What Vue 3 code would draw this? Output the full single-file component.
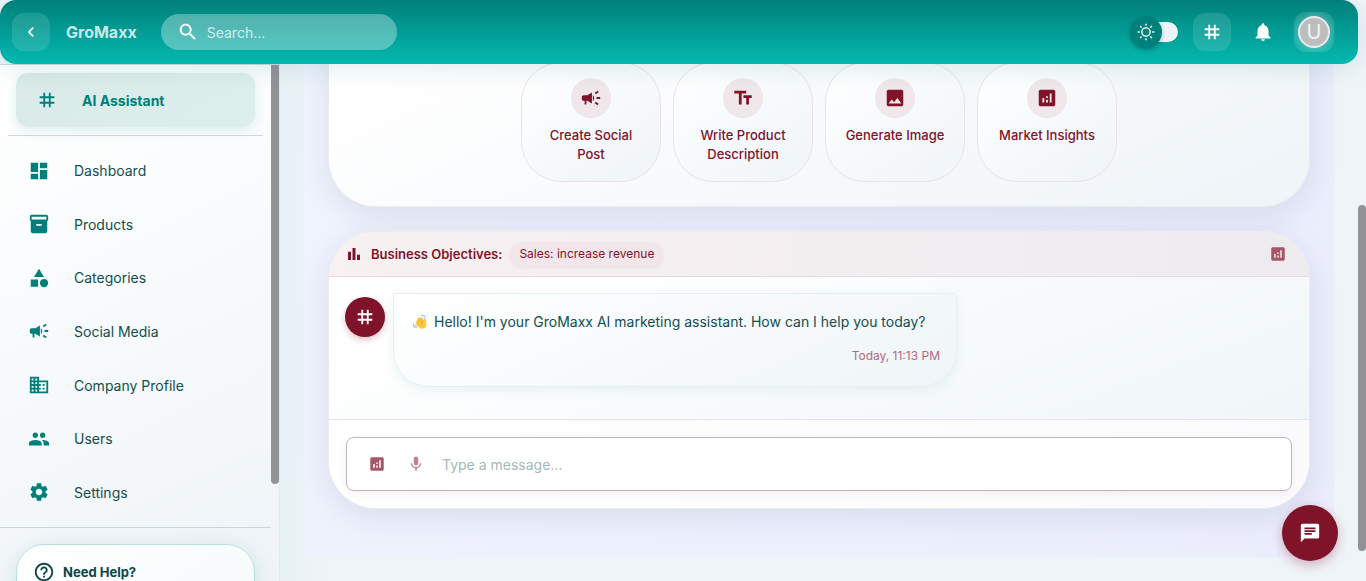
<script setup>
import { ref } from 'vue'

const icons = {
  dashboard: 'M3 13h8V3H3v10zm0 8h8v-6H3v6zm10 0h8V11h-8v10zm0-18v6h8V3h-8z',
  products: 'M20 2H4c-1 0-2 .9-2 2v3.01c0 .72.43 1.34 1 1.69V20c0 1.1 1.1 2 2 2h14c.9 0 2-.9 2-2V8.7c.57-.35 1-.97 1-1.69V4c0-1.1-1-2-2-2zm-5 12H9v-2h6v2zm5-7H4V4h16v3z',
  categories: 'M12 2l-5.5 9h11zM17.5 13a4.5 4.5 0 1 0 0 9 4.5 4.5 0 0 0 0-9zM3 13.5h8v8H3z',
  campaign: 'M18 11v2h4v-2h-4zm-2 6.61c.96.71 2.21 1.65 3.2 2.39.4-.53.8-1.07 1.2-1.6-.99-.74-2.24-1.68-3.2-2.4-.4.54-.8 1.08-1.2 1.61zM20.4 5.6c-.4-.53-.8-1.07-1.2-1.6-.99.74-2.24 1.68-3.2 2.4.4.53.8 1.07 1.2 1.6.96-.72 2.21-1.65 3.2-2.4zM4 9c-1.1 0-2 .9-2 2v2c0 1.1.9 2 2 2h1v4h2v-4h1l5 3V6L8 9H4zm11.5 3c0-1.33-.58-2.53-1.5-3.35v6.69c.92-.81 1.5-2.01 1.5-3.34z',
  business: 'M12 7V3H2v18h20V7H12zM6 19H4v-2h2v2zm0-4H4v-2h2v2zm0-4H4V9h2v2zm0-4H4V5h2v2zm4 12H8v-2h2v2zm0-4H8v-2h2v2zm0-4H8V9h2v2zm0-4H8V5h2v2zm10 12h-8v-2h2v-2h-2v-2h2v-2h-2V9h8v10zm-2-8h-2v2h2v-2zm0 4h-2v2h2v-2z',
  people: 'M16 11c1.66 0 2.99-1.34 2.99-3S17.66 5 16 5c-1.66 0-3 1.34-3 3s1.34 3 3 3zm-8 0c1.66 0 2.99-1.34 2.99-3S9.66 5 8 5C6.34 5 5 6.34 5 8s1.34 3 3 3zm0 2c-2.33 0-7 1.17-7 3.5V19h14v-2.5c0-2.33-4.67-3.5-7-3.5zm8 0c-.29 0-.62.02-.97.05 1.16.84 1.97 1.97 1.97 3.45V19h6v-2.5c0-2.33-4.67-3.5-7-3.5z',
  settings: 'M19.14 12.94c.04-.3.06-.61.06-.94 0-.32-.02-.64-.07-.94l2.03-1.58c.18-.14.23-.41.12-.61l-1.92-3.32c-.12-.22-.37-.29-.59-.22l-2.39.96c-.5-.38-1.03-.7-1.62-.94l-.36-2.54c-.04-.24-.24-.41-.48-.41h-3.84c-.24 0-.43.17-.47.41l-.36 2.54c-.59.24-1.13.57-1.62.94l-2.39-.96c-.22-.08-.47 0-.59.22L2.74 8.87c-.12.21-.08.47.12.61l2.03 1.58c-.05.3-.09.63-.09.94s.02.64.07.94l-2.03 1.58c-.18.14-.23.41-.12.61l1.92 3.32c.12.22.37.29.59.22l2.39-.96c.5.38 1.03.7 1.62.94l.36 2.54c.05.24.24.41.48.41h3.84c.24 0 .44-.17.47-.41l.36-2.54c.59-.24 1.13-.56 1.62-.94l2.39.96c.22.08.47 0 .59-.22l1.92-3.32c.12-.22.07-.47-.12-.61l-2.01-1.58zM12 15.6c-1.98 0-3.6-1.62-3.6-3.6s1.62-3.6 3.6-3.6 3.6 1.62 3.6 3.6-1.62 3.6-3.6 3.6z',
  tag: 'M20 10V8h-4V4h-2v4h-4V4H8v4H4v2h4v4H4v2h4v4h2v-4h4v4h2v-4h4v-2h-4v-4h4zm-6 4h-4v-4h4v4z',
  help: 'M11 18h2v-2h-2v2zm1-16C6.48 2 2 6.48 2 12s4.48 10 10 10 10-4.48 10-10S17.52 2 12 2zm0 18c-4.41 0-8-3.59-8-8s3.59-8 8-8 8 3.59 8 8-3.59 8-8 8zm0-14c-2.21 0-4 1.79-4 4h2c0-1.1.9-2 2-2s2 .9 2 2c0 2-3 1.75-3 5h2c0-2.25 3-2.5 3-5 0-2.21-1.79-4-4-4z',
  text: 'M2.5 4v3h5v12h3V7h5V4h-13zm19 5h-9v3h3v7h3v-7h3V9z',
  image: 'M21 19V5c0-1.1-.9-2-2-2H5c-1.1 0-2 .9-2 2v14c0 1.1.9 2 2 2h14c1.1 0 2-.9 2-2zM8.5 13.5l2.5 3.01L14.5 12l4.5 6H5l3.5-4.5z',
  analytics: 'M19 3H5c-1.1 0-2 .9-2 2v14c0 1.1.9 2 2 2h14c1.1 0 2-.9 2-2V5c0-1.1-.9-2-2-2zM9 17H7v-5h2v5zm4 0h-2v-3h2v3zm0-5h-2v-2h2v2zm4 5h-2V7h2v10z',
  bars: 'M4 9h4v11H4zm12 4h4v7h-4zm-6-9h4v16h-4z',
  search: 'M15.5 14h-.79l-.28-.27C15.41 12.59 16 11.11 16 9.5 16 5.91 13.09 3 9.5 3S3 5.91 3 9.5 5.91 16 9.5 16c1.61 0 3.09-.59 4.23-1.57l.27.28v.79l5 4.99L20.49 19l-4.99-5zm-6 0C7.01 14 5 11.99 5 9.5S7.01 5 9.5 5 14 7.01 14 9.5 11.99 14 9.5 14z',
  bell: 'M12 22c1.1 0 2-.9 2-2h-4c0 1.1.89 2 2 2zm6-6v-5c0-3.07-1.64-5.64-4.5-6.32V4c0-.83-.67-1.5-1.5-1.5s-1.5.67-1.5 1.5v.68C7.63 5.36 6 7.92 6 11v5l-2 2v1h16v-1l-2-2z',
  mic: 'M12 14c1.66 0 2.99-1.34 2.99-3L15 5c0-1.66-1.34-3-3-3S9 3.34 9 5v6c0 1.66 1.34 3 3 3zm5.3-3c0 3-2.54 5.1-5.3 5.1S6.7 14 6.7 11H5c0 3.41 2.72 6.23 6 6.72V21h2v-3.28c3.28-.48 6-3.3 6-6.72h-1.7z',
  chat: 'M20 2H4c-1.1 0-1.99.9-1.99 2L2 22l4-4h14c1.1 0 2-.9 2-2V4c0-1.1-.9-2-2-2zM6 9h12v2H6V9zm8 5H6v-2h8v2zm4-6H6V6h12v2z',
  back: 'M15.41 7.41 14 6l-6 6 6 6 1.41-1.41L10.83 12z',
}

const navItems = [
  { label: 'Dashboard', icon: icons.dashboard },
  { label: 'Products', icon: icons.products },
  { label: 'Categories', icon: icons.categories },
  { label: 'Social Media', icon: icons.campaign },
  { label: 'Company Profile', icon: icons.business },
  { label: 'Users', icon: icons.people },
  { label: 'Settings', icon: icons.settings },
]

const actions = [
  { label: 'Create Social Post', icon: icons.campaign },
  { label: 'Write Product Description', icon: icons.text },
  { label: 'Generate Image', icon: icons.image },
  { label: 'Market Insights', icon: icons.analytics },
]

const query = ref('')
const message = ref('')
const dark = ref(false)
</script>

<template>
  <div class="app">
    <header class="topbar">
      <button class="square" type="button" aria-label="Collapse menu">
        <svg class="i20" viewBox="0 0 24 24"><path :d="icons.back" /></svg>
      </button>
      <span class="brand">GroMaxx</span>
      <label class="search">
        <svg class="i22" viewBox="0 0 24 24"><path :d="icons.search" /></svg>
        <input v-model="query" type="text" placeholder="Search..." aria-label="Search" />
      </label>
      <div class="tools">
        <label class="switch">
          <input v-model="dark" type="checkbox" aria-label="Dark mode" />
          <span class="knob">
            <svg class="i20" viewBox="0 0 20 20"><path d="M9.305 1.667V3.75h1.389V1.667h-1.39zm-4.707 1.95l-.982.982L5.09 6.072l.982-.982-1.473-1.473zm10.802 0L13.927 5.09l.982.982 1.473-1.473-.982-.982zM10 5.139a4.872 4.872 0 00-4.862 4.86A4.872 4.872 0 0010 14.862 4.872 4.872 0 0014.86 10 4.872 4.872 0 0010 5.139zm0 1.389A3.462 3.462 0 0113.471 10a3.462 3.462 0 01-3.473 3.472A3.462 3.462 0 016.527 10 3.462 3.462 0 0110 6.528zM1.665 9.305v1.39h2.083v-1.39H1.666zm14.583 0v1.39h2.084v-1.39h-2.084zM5.09 13.928L3.616 15.4l.982.982 1.473-1.473-.982-.982zm9.82 0l-.982.982 1.473 1.473.982-.982-1.473-1.473zM9.305 16.25v2.083h1.389V16.25h-1.39z" /></svg>
          </span>
        </label>
        <button class="square" type="button" aria-label="AI assistant">
          <svg class="i22" viewBox="0 0 24 24"><path :d="icons.tag" /></svg>
        </button>
        <button class="plain" type="button" aria-label="Notifications">
          <svg class="i22" viewBox="0 0 24 24"><path :d="icons.bell" /></svg>
        </button>
        <button class="square account" type="button" aria-label="Account">
          <span class="avatar">U</span>
        </button>
      </div>
    </header>

    <aside class="sidebar">
      <div class="sidebar-body">
        <a class="assistant" href="#assistant">
          <svg class="i22" viewBox="0 0 24 24"><path :d="icons.tag" /></svg>
          <span>AI Assistant</span>
        </a>
        <nav class="nav">
          <a v-for="item in navItems" :key="item.label" class="nav-item" href="#">
            <svg class="i22" viewBox="0 0 24 24"><path :d="item.icon" /></svg>
            <span>{{ item.label }}</span>
          </a>
        </nav>
        <div class="help-area">
          <section class="help">
            <svg class="i22" viewBox="0 0 24 24"><path :d="icons.help" /></svg>
            <strong>Need Help?</strong>
          </section>
        </div>
      </div>
      <div class="side-scroll"><div class="side-thumb"></div></div>
    </aside>

    <main class="main">
      <div class="panel">
        <section class="card welcome">
          <button v-for="a in actions" :key="a.label" class="action" type="button">
            <span class="action-icon"><svg class="i22" viewBox="0 0 24 24"><path :d="a.icon" /></svg></span>
            <span>{{ a.label }}</span>
          </button>
        </section>

        <section class="card chat">
          <div class="objectives">
            <svg class="i18" viewBox="0 0 24 24"><path :d="icons.bars" /></svg>
            <strong>Business Objectives:</strong>
            <span class="chip">Sales: increase revenue</span>
            <button class="ghost" type="button" aria-label="View analytics">
              <svg class="i18" viewBox="0 0 24 24"><path :d="icons.analytics" /></svg>
            </button>
          </div>
          <div class="messages">
            <span class="bot"><svg class="i22" viewBox="0 0 24 24"><path :d="icons.tag" /></svg></span>
            <article class="bubble">
              <p class="greeting">
                <svg class="wave" viewBox="0 0 32 32">
                  <path fill="#ffc83d" d="M12 7.500c1-1 2.400-.8 3.200.2l1 1.200c.2-1.700 1.500-2.700 2.900-2.300.8.2 1.300.8 1.700 1.700l2 4.500 1.700-1.700c1.500-1.400 3.700-.9 4.200.9.200.9-.2 1.700-.8 2.500l.7 4.500c.9 5.500-1.900 10-7 10.500-3.600.4-6.500-.9-8.900-3.600l-5.200-5.900c-1.500-1.700.5-4.100 2.300-2.800L8.600 15.700c-1.300-1.600.7-3.800 2.500-2.500l-.3-.4c-1.400-1.900.2-4.200 1.200-5.300z" />
                  <path fill="none" stroke="#eba52f" stroke-width="1.200" stroke-linecap="round" d="M11.500 13.300l5.700 6M14 9.500l5.500 7M18 8.500l3.600 6.500M10 17l5 5M21.600 15c-2.500 2-3.300 4.500-2.200 7" />
                  <path fill="none" stroke="#9cc3f8" stroke-width="2.500" stroke-linecap="round" d="M19 3c3-.5 5.500.4 7.500 2.500M24 8.500c1 .4 1.600 1 2 1.800M3 20.500c-.2 3 .9 5.300 3 6.900M7 23c.5 1.400 1.200 2.200 2.300 3" />
                </svg>
                Hello! I'm your GroMaxx AI marketing assistant. How can I help you today?
              </p>
              <time class="time">Today, 11:13 PM</time>
            </article>
          </div>
          <form class="composer" @submit.prevent>
            <div class="field">
              <button class="ghost" type="button" aria-label="Insert analytics">
                <svg class="i18" viewBox="0 0 24 24"><path :d="icons.analytics" /></svg>
              </button>
              <button class="ghost mic" type="button" aria-label="Voice input">
                <svg class="i18" viewBox="0 0 24 24"><path :d="icons.mic" /></svg>
              </button>
              <input v-model="message" type="text" placeholder="Type a message..." aria-label="Message" />
            </div>
          </form>
        </section>
      </div>
    </main>

    <div class="page-scroll"><div class="page-thumb"></div></div>

    <button class="fab" type="button" aria-label="Open chat">
      <svg class="i22" viewBox="0 0 24 24"><path :d="icons.chat" /></svg>
    </button>
  </div>
</template>

<style>
body {
  background: #eff4f8;
}
</style>

<style scoped>
* {
  box-sizing: border-box;
}
.app {
  position: relative;
  display: grid;
  grid-template-columns: 280px minmax(0, 1fr) 8px;
  grid-template-rows: 64px minmax(0, 1fr);
  height: 100vh;
  overflow: hidden;
  font-family: Inter, 'Open Sans', sans-serif;
  font-size: 14px;
  color: #134e4f;
  background: #eff4f8;
}
button,
input {
  font: inherit;
  color: inherit;
  border: 0;
  padding: 0;
  margin: 0;
  background: none;
  outline: none;
}
a {
  color: inherit;
  text-decoration: none;
}
svg {
  display: block;
  flex: none;
  fill: currentColor;
}
.i18 { width: 18px; height: 18px; }
.i20 { width: 20px; height: 20px; }
.i22 { width: 22px; height: 22px; }

.topbar {
  grid-column: 1 / 3;
  grid-row: 1;
  z-index: 2;
  display: flex;
  align-items: center;
  padding: 0 24px 0 12px;
  border-radius: 16px;
  color: #fff;
  background: linear-gradient(180deg, #00807a, #04b9b0);
  box-shadow: 0 4px 24px rgba(0, 128, 118, 0.14);
}
.square {
  display: grid;
  place-items: center;
  width: 38px;
  height: 38px;
  border-radius: 12px;
  background: rgba(255, 255, 255, 0.12);
}
.brand {
  margin-left: 16px;
  font-size: 16px;
  font-weight: 700;
  color: rgba(255, 255, 255, 0.8);
}
.search {
  display: flex;
  align-items: center;
  gap: 8px;
  width: 236px;
  height: 36px;
  margin-left: 24px;
  padding: 0 16px;
  border-radius: 18px;
  background: rgba(255, 255, 255, 0.32);
}
.search input {
  flex: 1;
  min-width: 0;
}
.search input::placeholder {
  color: rgba(255, 255, 255, 0.75);
  opacity: 1;
}
.tools {
  display: flex;
  align-items: center;
  margin-left: auto;
}
.switch {
  display: flex;
  align-items: center;
  margin-right: 15px;
}
.switch input {
  appearance: none;
  width: 40px;
  height: 20px;
  border-radius: 10px;
  background: #eff4f8;
}
.knob {
  order: -1;
  z-index: 1;
  display: grid;
  place-items: center;
  width: 32px;
  height: 32px;
  margin-right: -24px;
  border-radius: 50%;
  background: #00807a;
  box-shadow: 0 2px 4px rgba(0, 0, 0, 0.25);
}
.plain {
  display: grid;
  place-items: center;
  width: 38px;
  height: 38px;
  margin: 0 12px 0 13px;
}
.account {
  width: 40px;
  height: 40px;
}
.avatar {
  display: grid;
  place-items: center;
  width: 32px;
  height: 32px;
  border: 2px solid #e9ecec;
  border-radius: 50%;
  font-size: 20px;
  color: #eff4f8;
  background: #bdbdbd;
  box-shadow: 0 0 8px rgba(255, 255, 255, 0.3);
}

.sidebar {
  grid-column: 1;
  grid-row: 2;
  display: flex;
  border-top: 1px solid #d0d6da;
  border-right: 1px solid #e2e8ec;
  background: linear-gradient(155deg, #fff, #f7fafc 50%, #eff4f8);
}
.sidebar-body {
  flex: 1;
  min-width: 0;
}
.assistant {
  display: flex;
  align-items: center;
  gap: 24px;
  height: 54px;
  margin: 8px 16px;
  padding: 0 20px;
  border-radius: 12px;
  font-weight: 700;
  color: #00807a;
  background: linear-gradient(145deg, #d9eae8, #ddefed);
  box-shadow: 0 4px 12px rgba(0, 128, 118, 0.12);
}
.nav {
  display: grid;
  grid-template-rows: repeat(7, 1fr);
  height: 392px;
  margin: 0 8px;
  padding: 8px 20px;
  border-top: 1px solid #d0d7db;
}
.nav-item {
  display: flex;
  align-items: center;
  gap: 24px;
}
.nav-item svg {
  color: #00807a;
}
.help-area {
  padding: 16px;
  border-top: 1px solid #cdd4da;
}
.help {
  display: flex;
  align-items: center;
  gap: 8px;
  height: 160px;
  padding: 16px;
  padding-bottom: 120px;
  border: 1px solid #b5e0de;
  border-radius: 28px;
  font-size: 13px;
  color: #0b4546;
  background: linear-gradient(145deg, #fff, #f2f8fa);
  box-shadow: 0 4px 24px rgba(0, 128, 118, 0.14);
}
.side-scroll {
  width: 8px;
}
.side-thumb {
  height: 419px;
  border-radius: 0 0 4px 4px;
  background: #939297;
}

.main {
  grid-column: 2;
  grid-row: 2;
  padding: 0 24px;
  background: linear-gradient(90deg, #e8f1f5, #ecf3f7 24px, #eff4f8 48px);
}
.panel {
  padding: 0 24px 48px;
  background: linear-gradient(115deg, #f0f4fe, #ebedfd);
}
.card {
  border: 1px solid #e9ecf0;
  border-radius: 48px;
  box-shadow: 0 8px 32px rgba(31, 38, 75, 0.1);
}
.welcome {
  display: flex;
  align-items: flex-start;
  justify-content: center;
  gap: 12px;
  margin-top: -32px;
  padding: 30px 24px 24px;
  border-top: 0;
  border-radius: 0 0 48px 48px;
  background: linear-gradient(155deg, #fff 10%, #f7fafc 50%, #eff4f8);
}
.action {
  display: flex;
  flex-direction: column;
  align-items: center;
  gap: 8px;
  width: 140px;
  height: 120px;
  padding: 15px 16px;
  border: 1px solid #ebe2e8;
  border-radius: 40px;
  font-size: 13px;
  font-weight: 500;
  line-height: 19px;
  color: #7f1329;
  background: linear-gradient(145deg, #fff, #f7fafc 50%, #eff4f8);
}
.action-icon {
  display: grid;
  place-items: center;
  width: 40px;
  height: 40px;
  border-radius: 50%;
  background: #efe7ea;
}
.chat {
  margin-top: 24px;
  overflow: hidden;
  background: linear-gradient(160deg, #fff 20%, #f6fafc 55%, #eff4f8);
}
.objectives {
  display: flex;
  align-items: center;
  gap: 8px;
  height: 45px;
  padding: 0 22px 0 16px;
  border-bottom: 1px solid #ecd8de;
  font-size: 13px;
  color: #7f1329;
  background: linear-gradient(90deg, #f8f1f2, #eeebef);
}
.objectives strong {
  font-weight: 600;
}
.chip {
  padding: 0 9px;
  border-radius: 12px;
  font-size: 12px;
  line-height: 24px;
  background: #f2e6ea;
  box-shadow: 0 2px 4px rgba(0, 0, 0, 0.06);
}
.ghost {
  display: grid;
  place-items: center;
  color: #a5586a;
}
.objectives .ghost {
  margin-left: auto;
}
.messages {
  display: flex;
  align-items: flex-start;
  gap: 8px;
  padding: 16px 16px 32px;
}
.bot {
  display: grid;
  place-items: center;
  flex: none;
  width: 40px;
  height: 40px;
  margin-top: 4px;
  border-radius: 50%;
  color: #fff;
  background: #7f1329;
  box-shadow: 0 3px 6px rgba(127, 19, 41, 0.25);
}
.bubble {
  min-width: 564px;
  padding: 16px 16px 20px 18px;
  border: 1px solid #e4eff1;
  border-radius: 0 4px 36px 36px;
  background: linear-gradient(155deg, #fff, #f7fafc 50%, #eff5f8);
  box-shadow: 0 4px 12px rgba(0, 128, 118, 0.08);
}
.greeting {
  display: flex;
  align-items: center;
  gap: 6px;
  margin: 0;
  line-height: 24px;
}
.wave {
  width: 16px;
  height: 16px;
}
.time {
  display: block;
  margin-top: 12px;
  font-size: 12px;
  line-height: 20px;
  text-align: right;
  color: #b26a7b;
}
.composer {
  padding: 17px;
  border-top: 1px solid #e9e3e7;
  background: linear-gradient(100deg, #fff, #fbfbfd);
}
.field {
  display: flex;
  align-items: center;
  height: 54px;
  padding: 0 21px;
  border: 1px solid #bdb7ba;
  border-radius: 8px;
  background: #fff;
  box-shadow: 0 2px 8px rgba(127, 19, 41, 0.08);
}
.field .mic {
  margin: 0 17px 0 21px;
  color: #bf8390;
}
.field input {
  flex: 1;
  min-width: 0;
}
.field input::placeholder {
  color: #a1b9bb;
  opacity: 1;
}

.page-scroll {
  grid-column: 3;
  grid-row: 1 / 3;
  padding-top: 205px;
}
.page-thumb {
  height: 346px;
  border-radius: 4px;
  background: #939297;
}
.fab {
  position: absolute;
  right: 28px;
  bottom: 20px;
  z-index: 3;
  display: grid;
  place-items: center;
  width: 56px;
  height: 56px;
  border-radius: 50%;
  color: #fff;
  background: #7f1329;
  box-shadow: 0 4px 12px rgba(127, 19, 41, 0.3);
}
</style>
